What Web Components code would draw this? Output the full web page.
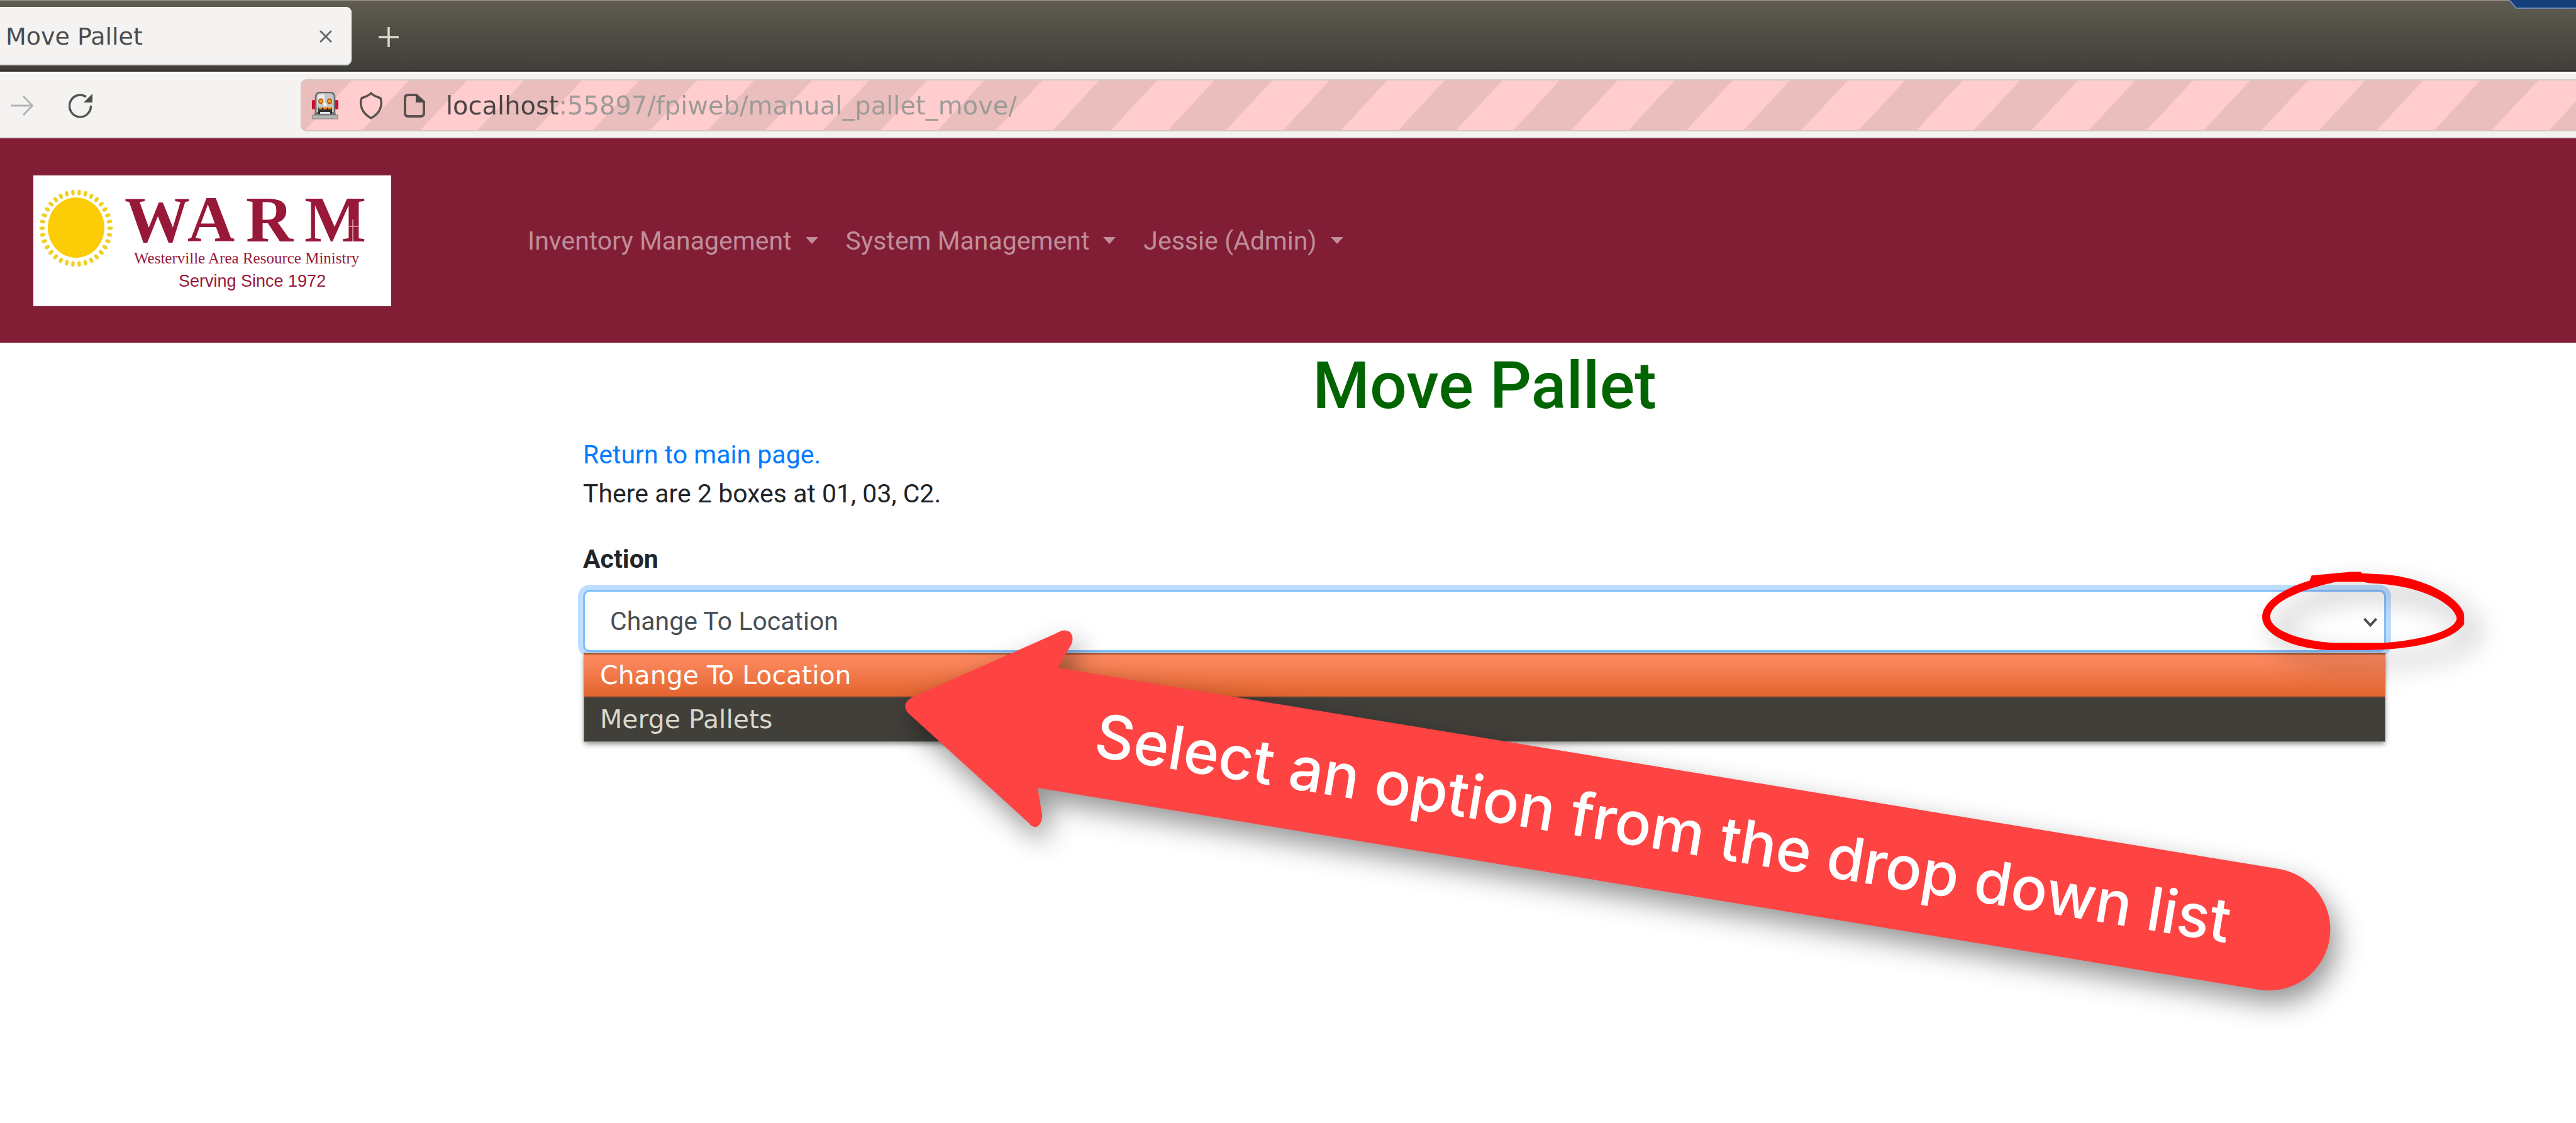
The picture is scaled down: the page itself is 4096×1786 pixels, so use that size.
<!DOCTYPE html>
<html lang="en">
<head>
<meta charset="utf-8">
<title>Move Pallet</title>
<style>
  html, body { margin: 0; background: #fff; }
  body { position: relative; min-height: 100vh; overflow-x: hidden; font-family: Roboto, "Liberation Sans", sans-serif; font-size: 41px; line-height: 62px; color: #212529; }
</style>
</head>
<body>
<browser-tabs>Move Pallet</browser-tabs>
<browser-toolbar url="localhost:55897/fpiweb/manual_pallet_move/"></browser-toolbar>
<site-navbar>
  <nav-item>Inventory Management</nav-item>
  <nav-item>System Management</nav-item>
  <nav-item>Jessie (Admin)</nav-item>
</site-navbar>
<pallet-page heading="Move Pallet">
  <action-select></action-select>
</pallet-page>
<page-callouts>Select an option from the drop down list</page-callouts>

<script>
const define = (name, html, after) => customElements.define(name, class extends HTMLElement {
  constructor() {
    super();
    this.attachShadow({ mode: 'open' }).innerHTML = html;
  }
  connectedCallback() { if (after) after(this, this.shadowRoot); }
});

define('browser-tabs', `
<style>
  :host { display: flex; position: relative; align-items: flex-start; box-sizing: border-box; height: 114px; padding-top: 10px;
    border-top: 1px solid #9b988f; border-bottom: 3px solid #32312c;
    background: linear-gradient(#625c52, #55544a 28%, #4b4a42 62%, #403f3a);
    font-family: "DejaVu Sans", sans-serif; font-size: 38px; line-height: 46px; color: #4c4c4c; }
  .tab { display: flex; align-items: center; justify-content: space-between; box-sizing: border-box; width: 559px; height: 93px;
    padding: 0 31px 0 9px; background: #f4f3f2; border-radius: 0 9px 9px 0; box-shadow: inset 0 2px #fff, inset 0 -2px #dcdbd8; }
  button { display: flex; padding: 0; border: 0; background: none; }
  .add { margin: 32px 0 0 43px; }
  .corner { position: absolute; top: -1px; right: 0; }
</style>
<div class="tab"><span><slot></slot></span>
  <button aria-label="Close tab"><svg width="20" height="22" viewBox="0 0 20 22"><path d="M1 2L19 20M19 2L1 20" stroke="#6a6a6a" stroke-width="3" fill="none"/></svg></button>
</div>
<button class="add" aria-label="New tab"><svg width="32" height="32" viewBox="0 0 32 32"><path d="M16 0V32M0 16H32" stroke="#dedbcf" stroke-width="3.5"/></svg></button>
<svg class="corner" width="106" height="15" viewBox="0 0 106 15"><path d="M0 0H106V13H11Z" fill="#133f7b"/><path d="M0 0L11 13H106" fill="none" stroke="#6d8bb4" stroke-width="2"/></svg>
`);

define('browser-toolbar', `
<style>
  :host { display: flex; align-items: center; box-sizing: border-box; height: 106px; padding-left: 17px;
    background: #f4f3f2; border-top: 3px solid #fff; border-bottom: 2px solid #d6d4d2; }
  button { display: flex; padding: 0; border: 0; background: none; }
  .reload { margin-left: 56px; }
  .bar { position: relative; display: flex; flex: 1; align-items: center; gap: 33px; box-sizing: border-box; height: 83px; margin-left: 331px; padding-left: 16px;
    border: 2px solid #d2c8c5; border-right: 0; border-radius: 9px 0 0 9px; overflow: hidden; background: #ffcdcd; }
  .bar > * { position: relative; flex: none; }
  .bar > .stripes { position: absolute; inset: 0; width: 100%; height: 100%; }
  .bar > input { flex: 1; min-width: 0; padding: 0; border: 0; outline: 0; height: 60px; font: 40px "DejaVu Sans", sans-serif; color: #4a4a4a;
    background: linear-gradient(90deg, #4a4444 180px, #9d9a98 180px); -webkit-background-clip: text; background-clip: text; -webkit-text-fill-color: transparent; }
</style>
<button aria-label="Forward"><svg width="36" height="34" viewBox="0 0 36 34"><path d="M0 17H34M20 2L34.500 17L20 32" fill="none" stroke="#b3b2b1" stroke-width="3"/></svg></button>
<button class="reload" aria-label="Reload"><svg width="38" height="40" viewBox="0 0 38 40"><path d="M35.500 20A17 17.500 0 1 1 28 6" fill="none" stroke="#555553" stroke-width="3.500"/><path d="M38 1V15H24Z" fill="#4c4c4a"/></svg></button>
<div class="bar">
  <svg class="stripes" aria-hidden="true"><defs><pattern id="s" width="183" height="183" patternUnits="userSpaceOnUse" patternTransform="translate(-13 0) skewX(-43)"><rect width="92" height="183" fill="#eabebd"/></pattern></defs><rect width="100%" height="100%" fill="url(#s)"/></svg>
  <svg width="42" height="44" viewBox="0 0 42 44">
    <rect x="0" y="13" width="6" height="15" rx="2" fill="#c8102e"/><rect x="36" y="13" width="6" height="15" rx="2" fill="#c8102e"/>
    <path d="M6 38V9Q6 1 13 1H29Q36 1 36 9V38Z" fill="#c6c6c6" stroke="#6c6c6c" stroke-width="2.500"/>
    <path d="M9 10Q9 4 15 4H20V20H9Z" fill="#ececec"/>
    <path d="M6 32H36L40 38H2Z" fill="#757575"/>
    <rect x="1" y="37" width="40" height="6" fill="#b5b5b5" stroke="#7f7f7f"/>
    <ellipse cx="14" cy="15" rx="4" ry="4.500" fill="#a85400"/><ellipse cx="28" cy="15" rx="4" ry="4.500" fill="#a85400"/>
    <circle cx="14" cy="15" r="2.500" fill="#ffa01f"/><circle cx="28" cy="15" r="2.500" fill="#ffa01f"/>
    <path d="M21 17L24 22H18Z" fill="#fff"/>
    <rect x="10" y="25" width="22" height="10" fill="#303030"/><path d="M11 25H16V28H11ZM18 25H24V28H18ZM26 25H31V28H26Z" fill="#f57900"/>
    <path d="M13 32H29V35H13Z" fill="#e6e6e6"/>
  </svg>
  <svg width="38" height="44" viewBox="0 0 38 44"><path d="M19 2C15 7 9 8 4 10C0 22 5 34 19 42C33 34 38 22 34 10C29 8 23 7 19 2Z" fill="none" stroke="#5c5050" stroke-width="3.500" stroke-linejoin="round"/></svg>
  <svg width="34" height="38" viewBox="0 0 34 38"><path d="M7 2H20L32 13V31Q32 36 27 36H7Q2 36 2 31V7Q2 2 7 2Z" fill="none" stroke="#5c5050" stroke-width="4"/><path d="M19 1L33 14H19Z" fill="#504848"/></svg>
  <input type="text" aria-label="Address">
</div>
`, (el, root) => { root.querySelector('input').value = el.getAttribute('url'); });

define('nav-item', `
<style>
  :host { display: block; }
  a { display: flex; align-items: center; gap: 22px; color: #c08e9a; text-decoration: none; }
  a::after { content: ""; border: 10px solid transparent; border-top: 11px solid; border-bottom: 0; }
</style>
<a href="#"><span><slot></slot></span></a>`);

define('warm-logo', `
<style>
  :host { display: block; width: 569px; height: 208px; background: #fff; }
  svg { display: block; }
  text { fill: #98183a; font-family: "Liberation Serif", serif; }
</style>
<svg width="569" height="208" viewBox="0 0 569 208" role="img" aria-label="WARM">
  <ellipse cx="68" cy="83" rx="45" ry="48" fill="#fccd06"/>
  <g class="rays" fill="#f0cf22"></g>
  <text font-size="104" font-weight="700" y="105"><tspan x="145">W</tspan><tspan x="245">A</tspan><tspan x="338">R</tspan><tspan x="431">M</tspan></text>
  <path d="M508 70V105M500 81H517" stroke="#e2a9b5" stroke-width="1.500"/>
  <text font-size="25" x="160" y="140">Westerville Area Resource Ministry</text>
  <text font-size="27" x="231" y="177" style="font-family:'Liberation Sans',sans-serif">Serving Since 1972</text>
</svg>`, (el, root) => {
  const n = 34;
  root.querySelector('.rays').innerHTML = Array.from({ length: n }, (_, i) => {
    const a = i * 2 * Math.PI / n, x = 68 + 54 * Math.cos(a), y = 84 + 57 * Math.sin(a);
    return `<ellipse rx="4.500" ry="2.800" transform="translate(${x.toFixed(1)} ${y.toFixed(1)}) rotate(${(a * 180 / Math.PI).toFixed(1)})"/>`;
  }).join('');
});

define('site-navbar', `
<style>
  :host { display: flex; align-items: center; box-sizing: border-box; height: 325px; padding-left: 53px; background: #811d35; }
  nav { display: flex; gap: 44px; margin-left: 217px; }
</style>
<warm-logo></warm-logo><nav><slot></slot></nav>`);

define('pallet-page', `
<style>
  :host { display: block; padding: 6px 302px 0 927px; }
  h1 { margin: 0 0 16px; font-size: 104px; line-height: 125px; font-weight: 500; text-align: center; color: #006400; }
  p { margin: 0; }
  a { color: #007bff; text-decoration: none; }
  slot { display: block; margin-top: 42px; }
</style>
<h1></h1>
<p><a href="#">Return to main page.</a></p>
<p>There are 2 boxes at 01, 03, C2.</p>
<slot></slot>`, (el, root) => { root.querySelector('h1').textContent = el.getAttribute('heading'); });

define('action-select', `
<style>
  :host { display: block; }
  label { display: block; margin-bottom: 18px; font-weight: 700; }
  .field { position: relative; }
  select { display: block; appearance: none; width: 100%; height: 99px; margin: 0; padding: 0 37px 0 40px; border: 3px solid #80bdff; border-radius: 11px;
    outline: 0; background: #fff; box-shadow: 0 0 0 8px #bfdeff; color: #495057; font: inherit; }
  svg { position: absolute; right: 13px; top: 43px; }
  .menu { position: absolute; top: 101px; left: 2px; right: 2px; margin: 0; padding: 0; list-style: none; background: #403f3a;
    box-shadow: 0 0 0 1px #8d8782, 0 4px 8px rgba(0,0,0,.45); font-family: "DejaVu Sans", sans-serif; font-size: 41px; line-height: 70px; color: #dad6ca; }
  li { padding-left: 25px; }
  .on { color: #fff; background: linear-gradient(#fc885d, #fa855a 22%, #e66935 85%, #e26530); box-shadow: inset 0 2px #a9522e, inset 0 -2px #b85a31; }
</style>
<label for="action">Action</label>
<div class="field">
  <select id="action"><option>Change To Location</option><option>Merge Pallets</option></select>
  <svg width="24" height="18" viewBox="0 0 24 18"><path d="M2.500 3L12 13.500L21.500 3" fill="none" stroke="#495057" stroke-width="4"/></svg>
  <ul class="menu" role="listbox" aria-label="Action"><li class="on" role="option" aria-selected="true">Change To Location</li><li role="option">Merge Pallets</li></ul>
</div>`);

define('page-callouts', `
<style>
  :host { position: absolute; top: 0; left: 0; width: 100%; pointer-events: none; }
  svg { display: block; width: 100%; overflow: visible; }
  .arrow { filter: drop-shadow(10px 20px 22px rgba(0,0,0,.42)); }
  .ring { filter: drop-shadow(20px 22px 21px rgba(0,0,0,.34)); }
  text { font-family: Inter, sans-serif; font-weight: 500; fill: #fff; }
</style>
<svg viewBox="0 0 4096 1786">
  <g class="arrow"><path fill="#fe4343" d="M1450 1109L1680 1007Q1692 999 1701 1005Q1708 1012 1704 1024L1682 1062L3624 1382A97 97 0 0 1 3592 1574L1650 1253L1657 1296Q1658 1308 1650 1314Q1643 1318 1636 1309L1444 1134Q1432 1120 1450 1109Z"/></g>
  <text font-size="96" transform="translate(1737 1202) rotate(9.360)"></text>
  <g class="ring"><path fill="#f00" fill-rule="evenodd" transform="translate(3472 881) scale(.3406 .2044)" d="M598 168L700 152L780 140H828L832 150L940 160C1130 185 1290 340 1310 470V545C1250 690 1040 745 850 748H680C500 735 367 620 367 490C367 380 460 270 588 208ZM715 216C560 270 405 370 405 490C405 600 560 680 710 692H930C1100 675 1275 600 1275 497C1260 380 1100 240 870 228L832 216Z"/></g>
</svg>`, (el, root) => { root.querySelector('text').textContent = el.textContent.trim(); });
</script>
</body>
</html>
